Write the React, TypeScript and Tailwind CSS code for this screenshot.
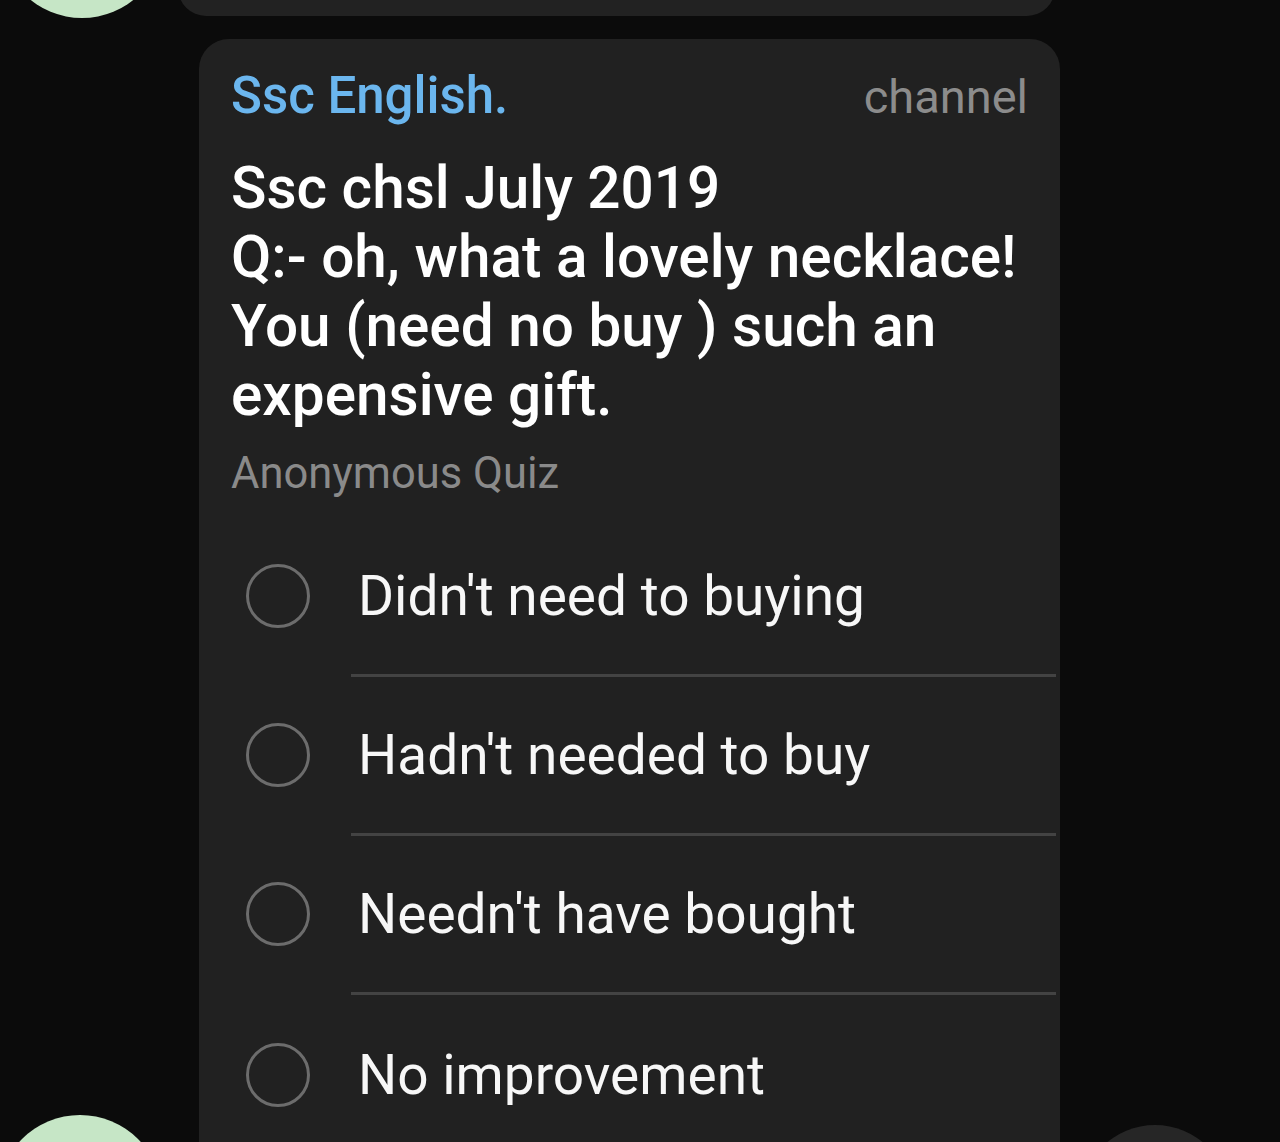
const options = [
  "Didn't need to buying",
  "Hadn't needed to buy",
  "Needn't have bought",
  "No improvement",
];

function OptionRow({ label, last }: { label: string; last: boolean }) {
  return (
    <div className="flex">
      <div className={`flex items-center pl-[47px] ${last ? "" : "pb-[3px]"}`}>
        <div className="w-[64px] h-[64px] rounded-full border-[3px] border-[#6c6c6c] shrink-0" />
      </div>
      <div
        className={`flex-1 ml-[41px] mr-[4px] h-[159px] flex items-center pl-[7px] ${
          last ? "" : "border-b-[3px] border-[#434343]"
        }`}
      >
        <span className="text-[55px] leading-[64px] text-[#f7f7f7] whitespace-nowrap">
          {label}
        </span>
      </div>
    </div>
  );
}

export default function App() {
  return (
    <div
      className="w-[1280px] h-[1142px] overflow-hidden bg-[#0b0b0b] flex flex-col"
      style={{ fontFamily: "Roboto, 'Noto Sans', sans-serif" }}
    >
      {/* previous message, mostly scrolled off */}
      <div className="flex items-end h-[100px] mt-[-82px] shrink-0">
        <div className="w-[164px] h-[164px] rounded-full bg-[#c6e6c6] shrink-0" />
        <div className="ml-[14px] mb-[2px] w-[877px] h-[100px] rounded-[28px] bg-[#222222]" />
      </div>

      {/* quiz message */}
      <div className="flex items-end mt-[21px] shrink-0">
        <div className="w-[164px] h-[164px] ml-[-2px] mb-[14px] rounded-full bg-[#c6e6c6] shrink-0" />
        <div className="ml-[37px] w-[861px] rounded-[30px] bg-[#212121] pt-[27px] pb-[139px] shrink-0">
          <div className="flex items-baseline justify-between pl-[32px] pr-[32px]">
            <span className="text-[51px] leading-[60px] font-medium text-[#6bb6ee]">
              Ssc English.
            </span>
            <span className="text-[47px] leading-[60px] text-[#8c8c8c]">channel</span>
          </div>
          <p className="mt-[27px] px-[32px] text-[58.5px] leading-[69px] font-medium text-white">
            Ssc chsl July 2019
            <br />
            Q:- oh, what a lovely necklace!
            <br />
            You (need no buy ) such an
            <br />
            expensive gift.
          </p>
          <p className="mt-[18px] px-[32px] text-[43.5px] leading-[52px] text-[#8a8a8a]">
            Anonymous Quiz
          </p>
          <div className="mt-[18px] flex flex-col">
            {options.map((o, i) => (
              <OptionRow key={o} label={o} last={i === options.length - 1} />
            ))}
          </div>
        </div>
        <div className="ml-[20px] mb-[18px] w-[150px] h-[150px] rounded-full bg-[#262626] shrink-0" />
      </div>
    </div>
  );
}
